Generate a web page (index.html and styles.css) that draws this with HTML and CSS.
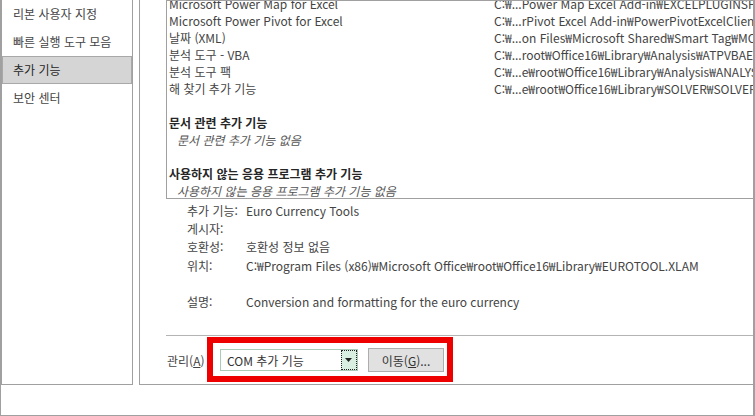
FILE: index.html
```html
<!DOCTYPE html>
<html lang="ko">
<head>
<meta charset="utf-8">
<title>Excel 옵션 - 추가 기능</title>
<link rel="stylesheet" href="styles.css">
</head>
<body>
<div class="frame">
  <div class="top">
    <nav class="nav">
      <div class="nav-item">리본 사용자 지정</div>
      <div class="nav-item">빠른 실행 도구 모음</div>
      <div class="nav-item selected">추가 기능</div>
      <div class="nav-item">보안 센터</div>
    </nav>
    <main class="main">
      <div class="list">
        <div class="list-inner">
          <div class="row"><span class="name">Microsoft Power Map for Excel</span><span class="path">C:₩...Power Map Excel Add-in₩EXCELPLUGINSHELL.DLL</span></div>
          <div class="row"><span class="name">Microsoft Power Pivot for Excel</span><span class="path">C:₩...rPivot Excel Add-in₩PowerPivotExcelClientAddIn.dll</span></div>
          <div class="row"><span class="name">날짜 (XML)</span><span class="path">C:₩...on Files₩Microsoft Shared₩Smart Tag₩MOFL.DLL</span></div>
          <div class="row"><span class="name">분석 도구 - VBA</span><span class="path">C:₩...root₩Office16₩Library₩Analysis₩ATPVBAEN.XLAM</span></div>
          <div class="row"><span class="name">분석 도구 팩</span><span class="path">C:₩...e₩root₩Office16₩Library₩Analysis₩ANALYS32.XLL</span></div>
          <div class="row"><span class="name">해 찾기 추가 기능</span><span class="path">C:₩...e₩root₩Office16₩Library₩SOLVER₩SOLVER.XLAM</span></div>
          <div class="row"></div>
          <div class="row section">문서 관련 추가 기능</div>
          <div class="row empty">문서 관련 추가 기능 없음</div>
          <div class="row"></div>
          <div class="row section">사용하지 않는 응용 프로그램 추가 기능</div>
          <div class="row empty">사용하지 않는 응용 프로그램 추가 기능 없음</div>
        </div>
      </div>
      <div class="details">
        <div class="drow"><span class="dlabel">추가 기능:</span><span class="dvalue">Euro Currency Tools</span></div>
        <div class="drow"><span class="dlabel">게시자:</span><span class="dvalue"></span></div>
        <div class="drow"><span class="dlabel">호환성:</span><span class="dvalue">호환성 정보 없음</span></div>
        <div class="drow"><span class="dlabel">위치:</span><span class="dvalue">C:₩Program Files (x86)₩Microsoft Office₩root₩Office16₩Library₩EUROTOOL.XLAM</span></div>
        <div class="drow"></div>
        <div class="drow"><span class="dlabel">설명:</span><span class="dvalue">Conversion and formatting for the euro currency</span></div>
      </div>
      <div class="manage">
        <span class="manage-label">관리(<u>A</u>)</span>
        <div class="combo">
          <span class="combo-text">COM 추가 기능</span>
          <span class="combo-arrow"><svg width="8" height="4" viewBox="0 0 8 4"><path d="M0 0H7L3.5 4Z" fill="#222"/></svg></span>
        </div>
        <button class="go-btn" type="button">이동(<u>G</u>)...</button>
        <div class="highlight"></div>
      </div>
    </main>
  </div>
</div>
</body>
</html>
```
FILE: styles.css
```css
* { box-sizing: border-box; }
html, body { margin: 0; padding: 0; background: #fff; }
body {
  font-family: "Noto Sans CJK KR", "Noto Sans", sans-serif;
  font-size: 12px;
  color: #444;
}
.frame {
  width: 755px;
  height: 416px;
  border-left: 1px solid #a0a0a0;
  border-right: 2px solid #a0a0a0;
  border-bottom: 1px solid #a0a0a0;
  overflow: hidden;
  background: #fff;
}
.top {
  display: flex;
  height: 385px;
}
.nav {
  flex: 0 0 132px;
  border-left: 1px solid #a0a0a0;
  border-right: 1px solid #a0a0a0;
  border-bottom: 1px solid #a0a0a0;
}
.nav-item {
  height: 28px;
  line-height: 28px;
  padding-left: 11px;
  white-space: nowrap;
  color: #444;
}
.nav-item.selected {
  background: #d5d5d5;
  border: 1px solid #a8a8a8;
  line-height: 26px;
  padding-left: 10px;
  color: #262626;
}
.main {
  flex: 0 0 660px;
  margin-left: 6px;
  border-left: 1px solid #a0a0a0;
  border-bottom: 1px solid #a0a0a0;
  display: flex;
  flex-direction: column;
  position: relative;
}
.list {
  margin-left: 26px;
  height: 199px;
  border: 1px solid #a0a0a0;
  overflow: hidden;
}
.list-inner {
  margin-top: -6px;
  padding-left: 2px;
}
.row {
  height: 17px;
  line-height: 17px;
  white-space: nowrap;
  display: flex;
}
.name {
  flex: 0 0 325px;
  overflow: hidden;
}
.path { white-space: nowrap; }
.row.section { font-weight: bold; color: #262626; }
.row.empty { font-style: italic; padding-left: 8px; color: #555; }
.details {
  margin-top: 3px;
  padding-left: 47px;
}
.drow {
  height: 18.2px;
  line-height: 18.2px;
  display: flex;
  white-space: nowrap;
}
.dlabel { flex: 0 0 59px; }
.manage {
  margin-top: auto;
  margin-left: 26px;
  height: 49px;
  border-top: 1px solid #b4b4b4;
  display: flex;
  align-items: center;
  padding-left: 1px;
  position: relative;
}
.manage-label { flex: 0 0 53px; }
.combo {
  width: 138px;
  height: 22px;
  border: 1px solid #a9cbb7;
  display: flex;
  align-items: center;
  background: #fff;
}
.combo-text {
  flex: 1;
  padding-left: 6px;
  color: #333;
}
.combo-arrow {
  width: 16px;
  height: 20px;
  border: 1px dotted #222;
  background: #d9efe2;
  display: flex;
  align-items: center;
  justify-content: center;
}
.go-btn {
  margin-left: 10px;
  width: 76px;
  height: 24px;
  background: #e1e1e1;
  border: 1px solid #adadad;
  font: inherit;
  color: #333;
  padding: 0;
}
.highlight {
  position: absolute;
  left: 41px;
  top: 1px;
  width: 246px;
  height: 45px;
  border: 6px solid #ee0000;
  pointer-events: none;
}
```
